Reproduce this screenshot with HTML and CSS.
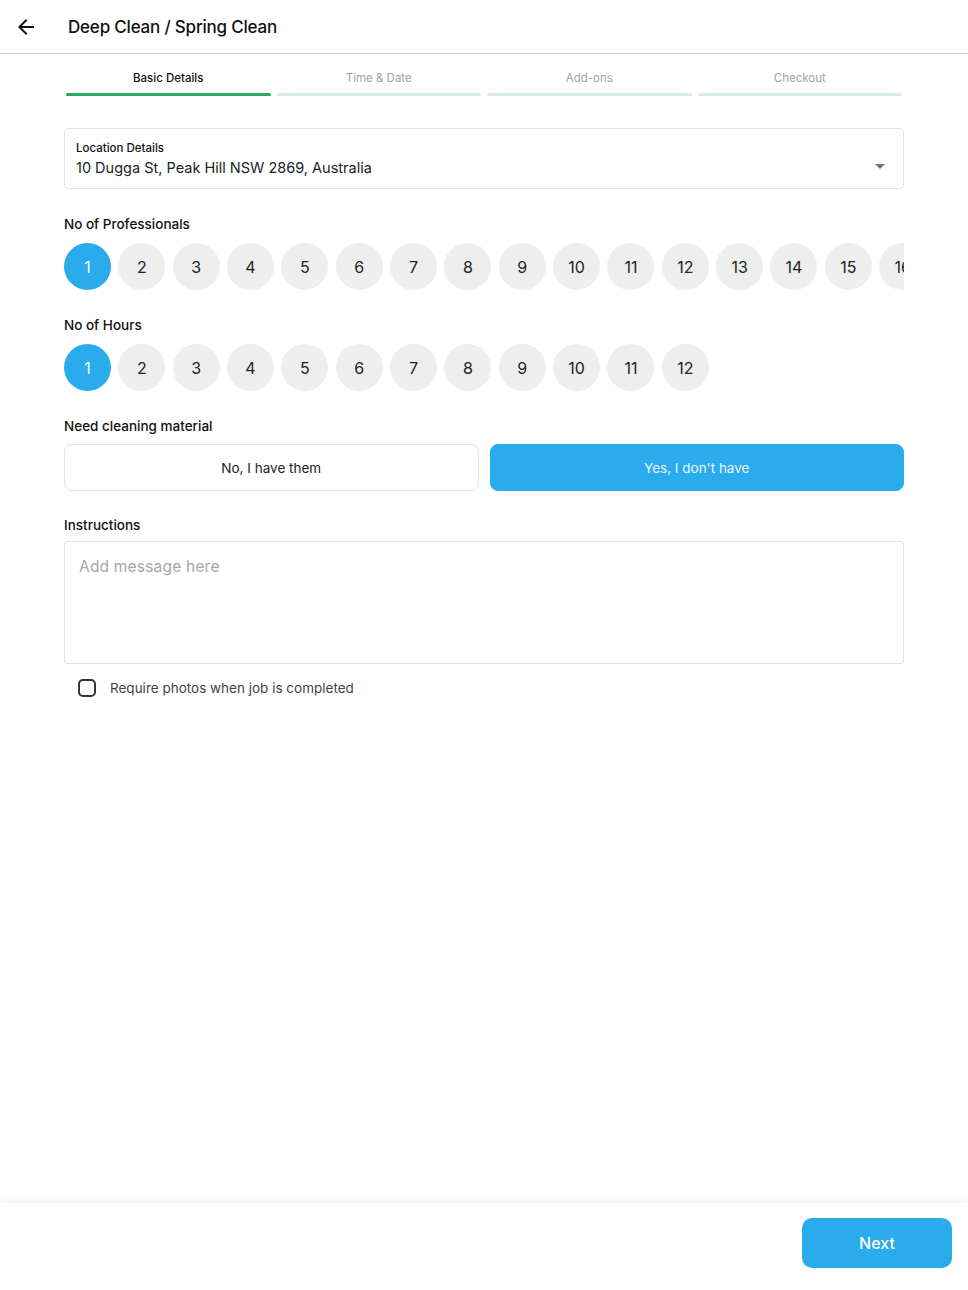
FILE: index.html
```html
<!DOCTYPE html>
<html lang="en">
<head>
    <meta charset="UTF-8">
    <meta name="viewport" content="width=device-width, initial-scale=1.0">
    <title>Deep Clean / Spring Clean</title>
    <link rel="stylesheet" href="styles.css">
</head>
<body>
    <div class="page">
        <header class="topbar">
            <button class="backBtn">
                <svg width="24" height="24" viewBox="0 0 24 24"><path d="M20 11H7.83l5.59-5.59L12 4l-8 8 8 8 1.41-1.41L7.83 13H20v-2z" fill="#111"/></svg>
            </button>
            <h1>Deep Clean / Spring Clean</h1>
        </header>

        <main class="content">
            <div class="steps">
                <div class="step active"><span>Basic Details</span><i></i></div>
                <div class="step"><span>Time &amp; Date</span><i></i></div>
                <div class="step"><span>Add-ons</span><i></i></div>
                <div class="step"><span>Checkout</span><i></i></div>
            </div>

            <div class="locationBox">
                <div class="locText">
                    <p class="locLabel">Location Details</p>
                    <p class="locValue">10 Dugga St, Peak Hill NSW 2869, Australia</p>
                </div>
                <span class="caret"></span>
            </div>

            <section class="field">
                <h2>No of Professionals</h2>
                <div class="circles">
                    <span class="circle active">1</span>
                    <span class="circle">2</span>
                    <span class="circle">3</span>
                    <span class="circle">4</span>
                    <span class="circle">5</span>
                    <span class="circle">6</span>
                    <span class="circle">7</span>
                    <span class="circle">8</span>
                    <span class="circle">9</span>
                    <span class="circle">10</span>
                    <span class="circle">11</span>
                    <span class="circle">12</span>
                    <span class="circle">13</span>
                    <span class="circle">14</span>
                    <span class="circle">15</span>
                    <span class="circle">16</span>
                </div>
            </section>

            <section class="field">
                <h2>No of Hours</h2>
                <div class="circles">
                    <span class="circle active">1</span>
                    <span class="circle">2</span>
                    <span class="circle">3</span>
                    <span class="circle">4</span>
                    <span class="circle">5</span>
                    <span class="circle">6</span>
                    <span class="circle">7</span>
                    <span class="circle">8</span>
                    <span class="circle">9</span>
                    <span class="circle">10</span>
                    <span class="circle">11</span>
                    <span class="circle">12</span>
                </div>
            </section>

            <section class="field">
                <h2>Need cleaning material</h2>
                <div class="choices">
                    <button class="choice">No, I have them</button>
                    <button class="choice active">Yes, I don't have</button>
                </div>
            </section>

            <section class="field notes">
                <h2>Instructions</h2>
                <textarea class="message" placeholder="Add message here"></textarea>
                <label class="checkRow">
                    <span class="checkBox"></span>
                    <span>Require photos when job is completed</span>
                </label>
            </section>
        </main>

        <footer class="bottomBar">
            <button class="nextBtn">Next</button>
        </footer>
    </div>
</body>
</html>
```

FILE: styles.css
```css
* {
    box-sizing: border-box;
}
body {
    margin: 0;
    font-family: 'Inter', 'Liberation Sans', sans-serif;
    color: #111;
    background-color: #fff;
}
p, h1, h2 {
    margin: 0;
}
button {
    font-family: inherit;
    cursor: pointer;
}
.page {
    display: flex;
    flex-direction: column;
    height: 100vh;
}
.topbar {
    height: 54px;
    display: flex;
    align-items: center;
    border-bottom: 1px solid #cfcfcf;
    padding-left: 14px;
    gap: 30px;
    flex-shrink: 0;
}
.backBtn {
    background: none;
    border: 0;
    padding: 0;
    width: 24px;
    height: 24px;
    display: flex;
}
.topbar h1 {
    font-size: 17px;
    font-weight: 500;
    letter-spacing: -0.2px;
}
.content {
    flex: 1;
    padding: 0 64px;
    overflow: hidden;
}
.steps {
    display: flex;
    gap: 6px;
    padding: 16px 2px 0;
}
.step {
    flex: 1;
    display: flex;
    flex-direction: column;
    align-items: center;
    gap: 7px;
}
.step span {
    font-size: 11.5px;
    line-height: 16px;
    color: #a3a3a3;
}
.step i {
    display: block;
    width: 100%;
    height: 3px;
    border-radius: 2px;
    background-color: #d6efe2;
}
.step.active span {
    color: #111;
    font-weight: 500;
}
.step.active i {
    background-color: #2ca76a;
}
.locationBox {
    margin-top: 32px;
    height: 61px;
    border: 1px solid #e4e4e4;
    border-radius: 4px;
    padding: 11px 18px 0 11px;
    display: flex;
    align-items: center;
    justify-content: space-between;
}
.locText {
    align-self: flex-start;
}
.locLabel {
    font-size: 11.5px;
    line-height: 16px;
    font-weight: 500;
}
.locValue {
    font-size: 14.5px;
    line-height: 20px;
    margin-top: 2px;
    color: #222;
}
.caret {
    width: 0;
    height: 0;
    border-left: 5px solid transparent;
    border-right: 5px solid transparent;
    border-top: 5px solid #777;
    margin-top: 4px;
}
.field {
    margin-top: 25px;
}
.field.notes {
    margin-top: 24px;
}
.field h2 {
    font-size: 13.5px;
    line-height: 20px;
    font-weight: 500;
    margin-bottom: 9px;
}
.circles {
    display: flex;
    gap: 7.35px;
    overflow: hidden;
}
.circle {
    flex-shrink: 0;
    width: 47px;
    height: 47px;
    border-radius: 50%;
    background-color: #eeeeee;
    display: flex;
    align-items: center;
    justify-content: center;
    font-size: 16px;
    color: #222;
}
.circle.active {
    background-color: #29abec;
    color: #fff;
}
.choices {
    display: flex;
    gap: 11px;
    margin-top: -1px;
}
.choice {
    flex: 1;
    height: 47px;
    border: 1px solid #e2e2e2;
    border-radius: 8px;
    background-color: #fff;
    font-size: 13.5px;
    color: #222;
}
.choice.active {
    background-color: #29abec;
    border-color: #29abec;
    color: #e9f6fd;
}
.message {
    display: block;
    width: 100%;
    height: 123px;
    margin-top: -3px;
    border: 1px solid #e2e2e2;
    border-radius: 3px;
    resize: none;
    padding: 15px 14px;
    font-family: inherit;
    font-size: 15.5px;
    outline: none;
}
.message::placeholder {
    color: #a6a6a6;
    letter-spacing: 0.2px;
}
.checkRow {
    display: flex;
    align-items: center;
    gap: 14px;
    margin-top: 15px;
    padding-left: 14px;
    font-size: 13.5px;
    color: #444;
}
.checkBox {
    width: 18px;
    height: 18px;
    border: 2px solid #333;
    border-radius: 5px;
}
.bottomBar {
    height: 87px;
    flex-shrink: 0;
    display: flex;
    justify-content: flex-end;
    align-items: flex-start;
    padding: 15px 16px 0 0;
    box-shadow: 0 -4px 8px rgba(0, 0, 0, 0.05);
}
.nextBtn {
    width: 150px;
    height: 50px;
    border: 0;
    border-radius: 10px;
    background-color: #29abec;
    color: #fff;
    font-size: 16px;
    font-weight: 500;
}
```
